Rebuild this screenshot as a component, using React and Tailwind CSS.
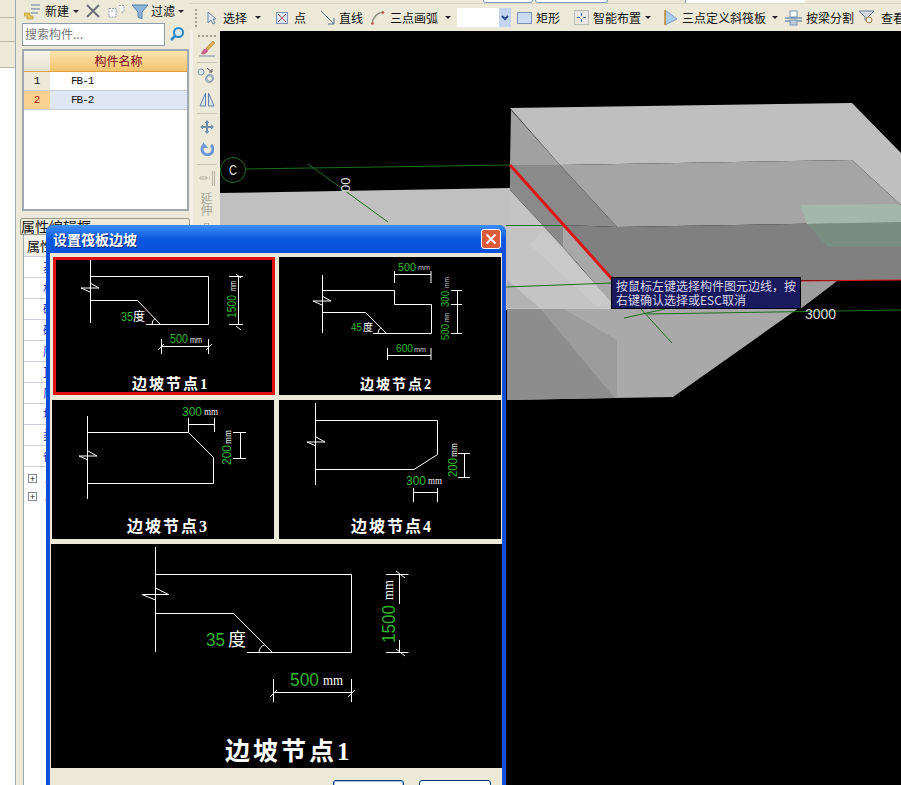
import React from "react";

const GREEN = "#2fb52f";
const SANS = "'Liberation Sans', sans-serif";
const TITLE = "'Liberation Serif', 'Noto Sans CJK SC', serif";

function L({ d, w = 1, c = "#fff" }) {
  return <path d={d} fill="none" stroke={c} strokeWidth={w} />;
}
function G({ x, y, s = 12, r, tl, children, c = GREEN, a = "start", f = SANS }) {
  return (
    <text
      x={x}
      y={y}
      fontSize={s}
      fill={c}
      fontFamily={f}
      textAnchor={a}
      textLength={tl}
      lengthAdjust={tl ? "spacingAndGlyphs" : undefined}
      transform={r ? `rotate(-90 ${x} ${y})` : undefined}
    >
      {children}
    </text>
  );
}
function Cap({ x, y, s, ls = 2, children }) {
  return (
    <text x={x} y={y} fontSize={s} fill="#fff" fontWeight="700" fontFamily={TITLE} letterSpacing={ls}>
      {children}
    </text>
  );
}
function Brk({ x, y }) {
  return <L d={`M${x - 9} ${y}H${x + 9}M${x - 9} ${y}L${x} ${y + 4}M${x} ${y - 5}L${x + 9} ${y}`} />;
}

function Node1() {
  return (
    <svg width="216" height="132" viewBox="56 260 216 132" className="block">
      <L d="M90.5 260V323M90.5 276.5H208.5V324.5H146M90.5 300.5H137.5L160.5 324.5" />
      <Brk x={90} y={288} />
      <path d="M152 324.5a7 7 0 0 1 3-6" fill="none" stroke="#fff" />
      <L d="M238.5 276V324M229 276.5H243M229 324.5H243M236 274l5 4M236 326l5 4" />
      <G x={236} y={318} s={12} tl={23} r>1500</G>
      <G x={236} y={291} s={9} tl={10} c="#eee" r>mm</G>
      <G x={121} y={321} s={12} tl={12}>35</G>
      <text x={133} y={321} fontSize="12" fill="#fff">度</text>
      <L d="M161.5 339V354M208.5 339V354M161 346.5H209M158 350l6-6M206 350l6-6" />
      <G x={170} y={343} s={12} tl={18}>500</G>
      <G x={190} y={343} s={9} tl={12} c="#eee">mm</G>
      <Cap x={132} y={389} s={15}>边坡节点1</Cap>
    </svg>
  );
}
function Node2() {
  return (
    <svg width="222" height="138" viewBox="279 257 222 138" className="block">
      <L d="M322.5 275V333M322.5 290.5H394.5V304.5H431.5V333.5H373M322.5 312.5H365.5L386.5 333.5" />
      <Brk x={322} y={301} />
      <path d="M378 333.5a7 7 0 0 1 3-6" fill="none" stroke="#fff" />
      <L d="M394.5 271V283M431 271V283M394 274.5H431" />
      <G x={398} y={271} s={11} tl={18}>500</G>
      <G x={418} y={270} s={7} tl={12} c="#ccc">mm</G>
      <L d="M457.5 290V334M451 290.5H462M451 304.5H462M451 333.5H462" />
      <G x={449} y={307} s={11} tl={16} r>300</G>
      <G x={449} y={288} s={7} tl={11} c="#ccc" r>mm</G>
      <G x={449} y={340} s={11} tl={16} r>500</G>
      <G x={449} y={322} s={7} tl={9} c="#ccc" r>mm</G>
      <L d="M387.5 348V360M431 348V360M387 355.5H431" />
      <G x={396} y={352} s={11} tl={17}>600</G>
      <G x={414} y={352} s={7} tl={12} c="#ccc">mm</G>
      <G x={351} y={331} s={11} tl={11}>45</G>
      <text x={363} y={331} fontSize="10" fill="#fff">度</text>
      <Cap x={360} y={389} s={14}>边坡节点2</Cap>
    </svg>
  );
}
function Node3() {
  return (
    <svg width="222" height="139" viewBox="52 400 222 139" className="block">
      <L d="M87.5 416V499M87.5 432.5H188.5L213.5 457.5V483.5H87.5" />
      <Brk x={88} y={456} />
      <L d="M188.5 418V432M214.5 418V432M188 424.5H214" />
      <G x={182} y={416} s={13} tl={20}>300</G>
      <G x={204} y={415} s={10} tl={14} c="#eee" f={TITLE}>mm</G>
      <L d="M240.5 432V458M233 432.5H246M233 458.5H246" />
      <G x={231} y={465} s={13} tl={20} r>200</G>
      <G x={231} y={444} s={10} tl={14} c="#eee" f={TITLE} r>mm</G>
      <Cap x={127} y={532} s={16}>边坡节点3</Cap>
    </svg>
  );
}
function Node4() {
  return (
    <svg width="222" height="139" viewBox="279 400 222 139" className="block">
      <L d="M315.5 403V485M315.5 420.5H437.5V454.5L414 469.5H315.5" />
      <Brk x={316} y={442} />
      <L d="M464.5 453V477M458 453.5H470M458 477.5H470" />
      <G x={457} y={477} s={13} tl={19} r>200</G>
      <G x={457} y={457} s={10} tl={14} c="#eee" f={TITLE} r>mm</G>
      <L d="M413.5 488V502M437.5 488V502M413 492.5H438" />
      <G x={406} y={485} s={13} tl={20}>300</G>
      <G x={428} y={484} s={10} tl={14} c="#eee" f={TITLE}>mm</G>
      <Cap x={351} y={532} s={16}>边坡节点4</Cap>
    </svg>
  );
}
function NodeBig() {
  return (
    <svg width="451" height="224" viewBox="51 544 451 224" className="block">
      <L d="M155.5 547V652M155.5 574.5H351.5V652.5H247M155.5 613.5H233.5L272.5 652.5" />
      <L d="M142 594.5H168.5M142 594.5L155.5 600M155.5 588L168.5 594.5" />
      <path d="M259 652.5a9 9 0 0 1 6-8" fill="none" stroke="#fff" />
      <L d="M399.5 574V604M399.5 640V652M386 574.5H408.5M386 652.5H408.5M396 571l9 7M396 649l9 7" />
      <G x={395} y={643} s={18} tl={38} r>1500</G>
      <G x={393} y={600} s={14} tl={20} c="#fff" f={TITLE} r>mm</G>
      <G x={206} y={646} s={18} tl={19}>35</G>
      <text x={228} y={646} fontSize="18" fill="#fff">度</text>
      <L d="M273.5 679V702M351.5 679V702M273 692.5H352M270 697l7-7M348 697l7-7" />
      <G x={290} y={686} s={18} tl={29}>500</G>
      <G x={323} y={685} s={14} tl={20} c="#fff" f={TITLE}>mm</G>
      <Cap x={225} y={760} s={25} ls={3}>边坡节点1</Cap>
    </svg>
  );
}

function Scene() {
  return (
    <svg width="681" height="754" viewBox="220 31 681 754" className="block">
      <rect x="220" y="31" width="681" height="754" fill="#000" />
      <polygon points="220,193 510,188 510,310 220,310" fill="#c0c0c0" />
      <polygon points="507,308 800,309 837,281 673,397 615,398 507,400" fill="#a9a9a9" />
      <polygon points="507,308 540,308 615,398 507,400" fill="#8d8d8d" />
      <polygon points="540,308 562,308 617,340 617,398 615,398" fill="#9c9c9c" />
      <polygon points="510,190 563,247 612,304 612,309 507,309 507,280" fill="#c4c4c4" />
      <polygon points="507,280 540,308 507,308" fill="#b2b2b2" />
      <polygon points="530,245 543,230 563,250 611,300 611,305 596,306" fill="#c9c9c9" />
      <polygon points="510,108 852,103 901,153 901,205 852,160 560,165" fill="#bfbfbf" />
      <polygon points="560,165 852,160 901,205 901,222 617,227" fill="#a5a5a5" />
      <polygon points="511,110 560,165 510,165" fill="#a2a2a2" />
      <polygon points="510,165 560,165 617,227 563,225 563,247 510,190" fill="#8a8a8a" />
      <polygon points="563,225 617,227 901,222 901,280 612,280" fill="#808080" />
      <polygon points="563,226 612,279 612,303 563,247" fill="#a8a8a8" />
      <polygon points="612,280 837,281 800,309 612,309" fill="#9c9c9c" />
      <polygon points="800,205 897,204 901,206 901,223 807,224" fill="#a4b7ad" />
      <polygon points="807,224 901,222 901,247 828,247" fill="#7a8d82" />
      <L d="M245 169L510 165M308 164L388 222M506 225.5H563M506 287L612 283M624 318L665 309M640 308L672 343M647 314L901 310" c="#1c701c" />
      <circle cx="233" cy="170" r="12.5" fill="none" stroke="#1c701c" />
      <G x={229} y={175} s={14} tl={8} c="#e0e0e0">C</G>
      <text x="350" y="192" fontSize="13" fill="#ddd" fontFamily={SANS} transform="rotate(-90 350 192)">00</text>
      <L d="M510 165L612 279" w={3} c="#df1414" />
      <L d="M801 281L901 280" c="#df1414" />
      <text x="805" y="319" fontSize="14" fill="#dcdcdc" fontFamily={SANS}>3000</text>
    </svg>
  );
}

function Grip({ n = 6, vertical }) {
  return (
    <div className={vertical ? "flex flex-col gap-[2px]" : "flex gap-[2px]"}>
      {Array.from({ length: n }).map((_, i) => (
        <span key={i} className="block w-[2px] h-[2px] bg-[#a09f90]" />
      ))}
    </div>
  );
}
const Caret = ({ className }) => (
  <span className={"block w-0 h-0 border-x-[3px] border-t-[3px] border-x-transparent border-t-[#222] " + className} />
);
const Sep = ({ className }) => <span className={"block w-px h-[20px] bg-[#c8c5b2] " + className} />;

export default function App() {
  return (
    <div className="relative flex w-[901px] h-[785px] overflow-hidden bg-[#ece9d8] text-[12px] text-[#111] [font-family:'Noto_Sans_CJK_SC',sans-serif]">
      {/* left edge */}
      <div className="flex flex-col w-[16px] shrink-0 border-r border-[#9aa7b4]">
        <div className="h-[18px] border-b border-[#b9b6a5]" />
        <div className="h-[24px] border-b border-[#b9b6a5]" />
        <div className="h-[26px] border-b border-[#b9b6a5]" />
        <div className="flex-1 bg-white" />
      </div>

      {/* component panel */}
      <div className="flex flex-col w-[174px] shrink-0 pl-[4px] pr-0">
        <div className="flex items-center h-[22px] shrink-0">
          <svg width="18" height="18" viewBox="0 0 18 18" className="ml-[4px] shrink-0">
            <path d="M7 3H16M7 7H16M7 11H14" stroke="#5e7f9f" fill="none" />
            <path d="M3 11h3v3h3v3H6v-0H3v-3H0v-3h3z" fill="#e9c75a" stroke="#a58a2e" strokeWidth=".6" />
          </svg>
          <span className="ml-[3px] w-[24px] shrink-0">新建</span>
          <Caret className="ml-[4px]" />
          <svg width="14" height="14" viewBox="0 0 14 14" className="ml-[7px] shrink-0">
            <path d="M1 1L13 13M13 1L1 13" stroke="#6d7177" strokeWidth="2" />
          </svg>
          <svg width="18" height="14" viewBox="0 0 18 14" className="ml-[8px] shrink-0">
            <path d="M1 4.5H8V13H1zM3 7H6M11 1.5H16V8H13" fill="#fff" stroke="#8b9bad" strokeDasharray="2 1" />
          </svg>
          <svg width="16" height="15" viewBox="0 0 16 15" className="ml-[6px] shrink-0">
            <path d="M0 1H16L10 8V15L6 13V8z" fill="#8db4d8" stroke="#557fa6" />
          </svg>
          <span className="ml-[3px] w-[24px] shrink-0">过滤</span>
          <Caret className="ml-[3px]" />
        </div>
        <div className="flex items-center h-[24px] shrink-0 ml-[2px]">
          <div className="w-[143px] h-[23px] bg-white border border-[#8f9dab] flex items-center pl-[2px] text-[#777]">搜索构件...</div>
          <svg width="16" height="16" viewBox="0 0 16 16" className="ml-[4px] shrink-0">
            <circle cx="9.5" cy="6.5" r="4.5" fill="#d4ecf8" stroke="#2a86c4" strokeWidth="2" />
            <path d="M6 10L2 14" stroke="#2a86c4" strokeWidth="2.5" />
          </svg>
        </div>
        <div className="mt-[3px] ml-[2px] w-[167px] h-[162px] shrink-0 bg-white border-2 border-[#a0a9b0] flex flex-col">
          <div className="flex h-[21px] shrink-0 border-b border-[#e0a040]">
            <div className="w-[26px] bg-gradient-to-b from-[#f6f4ea] to-[#e4e1d2]" />
            <div className="flex-1 bg-gradient-to-b from-[#fbe3ad] to-[#f2c36c] flex items-center justify-center text-[#800020]">构件名称</div>
          </div>
          <div className="flex h-[19px] shrink-0 border-b border-[#c6ccd2]">
            <div className="w-[26px] bg-[#ece9d8] flex items-center justify-center [font-family:'Liberation_Mono',monospace] text-[11px]">1</div>
            <div className="flex-1 flex items-center pl-[21px] [font-family:'Liberation_Mono',monospace] text-[11px] tracking-[-1px]">FB-1</div>
          </div>
          <div className="flex h-[19px] shrink-0 border-b border-[#c6ccd2]">
            <div className="w-[26px] bg-[#fbd18d] flex items-center justify-center [font-family:'Liberation_Mono',monospace] text-[11px] text-[#9c1010]">2</div>
            <div className="flex-1 bg-[#dfe7f3] flex items-center pl-[21px] [font-family:'Liberation_Mono',monospace] text-[11px] tracking-[-1px]">FB-2</div>
          </div>
        </div>
        <div className="mt-[7px] h-[17px] shrink-0 border border-[#9a9a8c] rounded-t-[2px] text-[14px] leading-[15px] whitespace-nowrap overflow-hidden">属性编辑框</div>
        <div className="flex-1 ml-[3px] bg-white border-l border-[#a0a9b0] flex flex-col">
          <div className="h-[22px] shrink-0 border-b border-[#c6ccd2] pl-[3px] text-[13px] leading-[22px] bg-[#f4f2e8]">属性</div>
          {["基", "材", "砼", "砼", "底", "顶", "厚", "坡", "类", "备"].map((t, i) => (
            <div key={i} className="h-[21px] shrink-0 border-b border-[#c6ccd2] pl-[19px] leading-[20px] text-[#1030c0]">{t}</div>
          ))}
          <div className="h-[2px] shrink-0" />
          {[0, 1].map((i) => (
            <div key={i} className="flex items-center h-[18px] shrink-0 pl-[4px]">
              <span className="flex items-center justify-center w-[9px] h-[9px] border border-[#7f8a96] bg-white text-[9px] leading-none">+</span>
              <span className="ml-[8px] text-[#1030c0]">显示样式</span>
            </div>
          ))}
        </div>
      </div>

      {/* right side */}
      <div className="flex flex-col flex-1 min-w-0">
        <div className="h-[4px] shrink-0 border-b border-[#d8d5c4] flex">
          <span className="block ml-[293px] w-[50px] h-[3px] bg-white border-x border-b border-[#7f9db9] rounded-b-[3px]" />
          <span className="block ml-[2px] w-[73px] h-[3px] bg-white border-x border-b border-[#7f9db9] rounded-b-[3px]" />
          <span className="block ml-[77px] w-[120px] h-[3px] bg-white border-l border-[#7f9db9]" />
        </div>
        <div className="flex items-center h-[27px] shrink-0 whitespace-nowrap overflow-hidden">
          <span className="ml-[5px]"><Grip n={5} vertical /></span>
          <svg width="10" height="14" viewBox="0 0 10 14" className="ml-[10px] shrink-0">
            <path d="M1 1V12L4 9L6 13L8 12L6 8H9z" fill="#dfe6f0" stroke="#6b86a6" />
          </svg>
          <span className="ml-[6px] w-[24px] shrink-0">选择</span>
          <Caret className="ml-[8px]" />
          <Sep className="ml-[6px]" />
          <svg width="12" height="12" viewBox="0 0 12 12" className="ml-[9px] shrink-0">
            <rect x=".5" y=".5" width="11" height="11" fill="#dce4f0" stroke="#7b93b5" />
            <path d="M2 2L10 10M10 2L2 10" stroke="#b05060" />
          </svg>
          <span className="ml-[6px] w-[12px] shrink-0">点</span>
          <Sep className="ml-[7px]" />
          <svg width="14" height="14" viewBox="0 0 14 14" className="ml-[8px] shrink-0">
            <path d="M0 0L13 13M13 7V13H7" fill="none" stroke="#54708f" />
          </svg>
          <span className="ml-[4px] w-[24px] shrink-0">直线</span>
          <svg width="14" height="14" viewBox="0 0 14 14" className="ml-[8px] shrink-0">
            <path d="M1 13C2 6 6 2 12 1" fill="none" stroke="#8a8f80" strokeWidth="1.5" />
            <circle cx="1.5" cy="12.5" r="1.3" fill="#c05050" />
            <circle cx="12" cy="1.5" r="1.3" fill="#c05050" />
          </svg>
          <span className="ml-[5px] w-[48px] shrink-0">三点画弧</span>
          <Caret className="ml-[7px]" />
          <div className="ml-[6px] w-[54px] h-[19px] shrink-0 bg-white flex justify-end">
            <span className="w-[12px] h-full bg-[#c3d3f2] flex items-center justify-center">
              <svg width="8" height="6" viewBox="0 0 8 6"><path d="M1 1L4 4L7 1" fill="none" stroke="#2a4a8a" strokeWidth="2" /></svg>
            </span>
          </div>
          <svg width="15" height="12" viewBox="0 0 15 12" className="ml-[6px] shrink-0">
            <rect x=".5" y=".5" width="14" height="11" fill="#c9dcf2" stroke="#7b93b5" />
          </svg>
          <span className="ml-[4px] w-[24px] shrink-0">矩形</span>
          <Sep className="ml-[6px]" />
          <svg width="15" height="15" viewBox="0 0 15 15" className="ml-[8px] shrink-0">
            <rect x=".5" y=".5" width="14" height="14" fill="#e8e8e0" stroke="#8a9098" strokeDasharray="1 1" />
            <path d="M7.5 3V6M7.5 9V12M3 7.5H6M9 7.5H12" stroke="#3a6aa0" />
          </svg>
          <span className="ml-[4px] w-[48px] shrink-0">智能布置</span>
          <Caret className="ml-[4px]" />
          <Sep className="ml-[4px]" />
          <svg width="15" height="17" viewBox="0 0 15 17" className="ml-[8px] shrink-0">
            <path d="M2 1V16L14 10z" fill="#a9cdea" stroke="#7a9ec0" />
            <path d="M2 1V16" stroke="#d09030" strokeWidth="1.5" />
          </svg>
          <span className="ml-[4px] w-[84px] shrink-0">三点定义斜筏板</span>
          <Caret className="ml-[6px]" />
          <svg width="17" height="16" viewBox="0 0 17 16" className="ml-[7px] shrink-0">
            <rect x="5" y="1" width="7" height="6" fill="#fff" stroke="#7b93b5" />
            <path d="M0 8H17M0 11H17" stroke="#3a6aa0" />
            <rect x="5" y="10" width="7" height="5" fill="#bcd" stroke="#7b93b5" />
          </svg>
          <span className="ml-[4px] w-[48px] shrink-0">按梁分割</span>
          <svg width="15" height="15" viewBox="0 0 15 15" className="ml-[5px] shrink-0">
            <path d="M0 1H15L9 7V12L6 10V7z" fill="#d5d8dc" stroke="#6b7f96" />
            <circle cx="10" cy="10" r="3" fill="#eee" stroke="#a08040" />
          </svg>
          <span className="ml-[7px] shrink-0">查看</span>
        </div>
        <div className="flex flex-1 min-h-0">
          <div className="w-[30px] shrink-0 flex">
            <div className="w-[3px] bg-[#f4f2e8]" />
            <div className="flex-1 flex flex-col items-center">
              <span className="mt-[4px]"><Grip n={5} /></span>
              <svg width="18" height="18" viewBox="0 0 18 18" className="mt-[3px]">
                <path d="M1 16H17" stroke="#7a8a9a" />
                <path d="M8 8L15 1L17 3L10 10z" fill="#e0b050" stroke="#90803a" strokeWidth=".6" />
                <path d="M3 14C4 10 7 8 9 9L10 11C8 14 6 15 3 14z" fill="#d06090" />
              </svg>
              <span className="block w-[20px] h-px bg-[#c8c5b2] mt-[4px]" />
              <svg width="19" height="17" viewBox="0 0 19 17" className="mt-[4px]">
                <circle cx="4" cy="5" r="3" fill="#dde6f2" stroke="#7b93b5" />
                <circle cx="12" cy="12" r="3.5" fill="none" stroke="#7b93b5" />
                <circle cx="13" cy="11" r="3.5" fill="none" stroke="#7b93b5" />
                <path d="M10 1L15 5M15 2V5H12" fill="none" stroke="#555" />
              </svg>
              <svg width="16" height="15" viewBox="0 0 16 15" className="mt-[8px]">
                <path d="M6.5 1V14H1zM9.5 1V14H15z" fill="#dde6f2" stroke="#5f7fae" />
              </svg>
              <span className="block w-[20px] h-px bg-[#c8c5b2] mt-[6px]" />
              <svg width="14" height="14" viewBox="0 0 14 14" className="mt-[6px]">
                <path d="M7 0L9.5 3H8V6H11V4.5L14 7L11 9.5V8H8V11H9.5L7 14L4.5 11H6V8H3V9.5L0 7L3 4.5V6H6V3H4.5z" fill="#6f8fb0" />
              </svg>
              <svg width="14" height="14" viewBox="0 0 14 14" className="mt-[8px]">
                <path d="M4 3A5.5 5.5 0 1 0 11 3" fill="none" stroke="#6f97d8" strokeWidth="3" />
                <path d="M3 0V6H8" fill="#6f97d8" />
              </svg>
              <span className="block w-[20px] h-px bg-[#c8c5b2] mt-[8px]" />
              <svg width="16" height="15" viewBox="0 0 16 15" className="mt-[6px]">
                <path d="M1 6H8V8H1zM10 6H11M10 8H11M13.5 0V15M15.5 0V15" fill="none" stroke="#b5b3a4" />
              </svg>
              <div className="w-[12px] mt-[6px] text-[12px] leading-[12px] text-[#a9a798] break-all">延伸</div>
              <span className="block w-[5px] h-[4px] mt-[7px] border border-[#b5b3a4]" />
            </div>
          </div>
          <div className="relative flex-1 min-w-0 bg-black">
            <Scene />
            <div className="absolute left-[391px] top-[246px] w-[190px] h-[32px] bg-[#1a1a5e] border border-black text-[#d6d6ea] text-[12px] leading-[14px] pl-[4px] pt-[1px] whitespace-nowrap">
              <div>按鼠标左键选择构件图元边线，按</div>
              <div>右键确认选择或ESC取消</div>
            </div>
          </div>
        </div>
      </div>

      {/* dialog */}
      <div className="absolute left-[46px] top-[225px] w-[460px] h-[560px] flex flex-col rounded-t-[7px] overflow-hidden bg-[#0a4fd8] px-[4px]">
        <div className="-mx-[4px] h-[28px] shrink-0 flex items-center justify-between pl-[7px] pr-[5px] bg-gradient-to-b from-[#3d8ef5] via-[#0a58e0] to-[#0a50d8]">
          <span className="text-white font-bold text-[14px] [text-shadow:1px_1px_0_#0a2a80]">设置筏板边坡</span>
          <span className="flex items-center justify-center w-[20px] h-[20px] rounded-[3px] border border-white bg-[#dc5a38]">
            <svg width="12" height="12" viewBox="0 0 12 12"><path d="M1.5 1.5L10.5 10.5M10.5 1.5L1.5 10.5" stroke="#fff" strokeWidth="2" /></svg>
          </span>
        </div>
        <div className="flex-1 flex flex-col bg-[#ece9d8]">
          <div className="flex mt-[4px] ml-[3px] gap-[4px]">
            <div className="w-[222px] h-[138px] border-[3px] border-[#e01010] bg-black"><Node1 /></div>
            <div className="w-[222px] h-[138px] bg-black"><Node2 /></div>
          </div>
          <div className="flex mt-[5px] ml-[2px] gap-[5px]">
            <div className="w-[222px] h-[139px] bg-black"><Node3 /></div>
            <div className="w-[222px] h-[139px] bg-black"><Node4 /></div>
          </div>
          <div className="mt-[5px] ml-[1px] w-[451px] h-[224px] bg-black"><NodeBig /></div>
          <div className="flex mt-[12px] ml-[283px] gap-[15px]">
            <div className="w-[71px] h-[24px] rounded-[3px] bg-white border border-[#003c74] shadow-[inset_0_0_0_1px_#a6c0e8]" />
            <div className="w-[72px] h-[24px] rounded-[3px] bg-white border border-[#003c74]" />
          </div>
        </div>
      </div>
    </div>
  );
}
